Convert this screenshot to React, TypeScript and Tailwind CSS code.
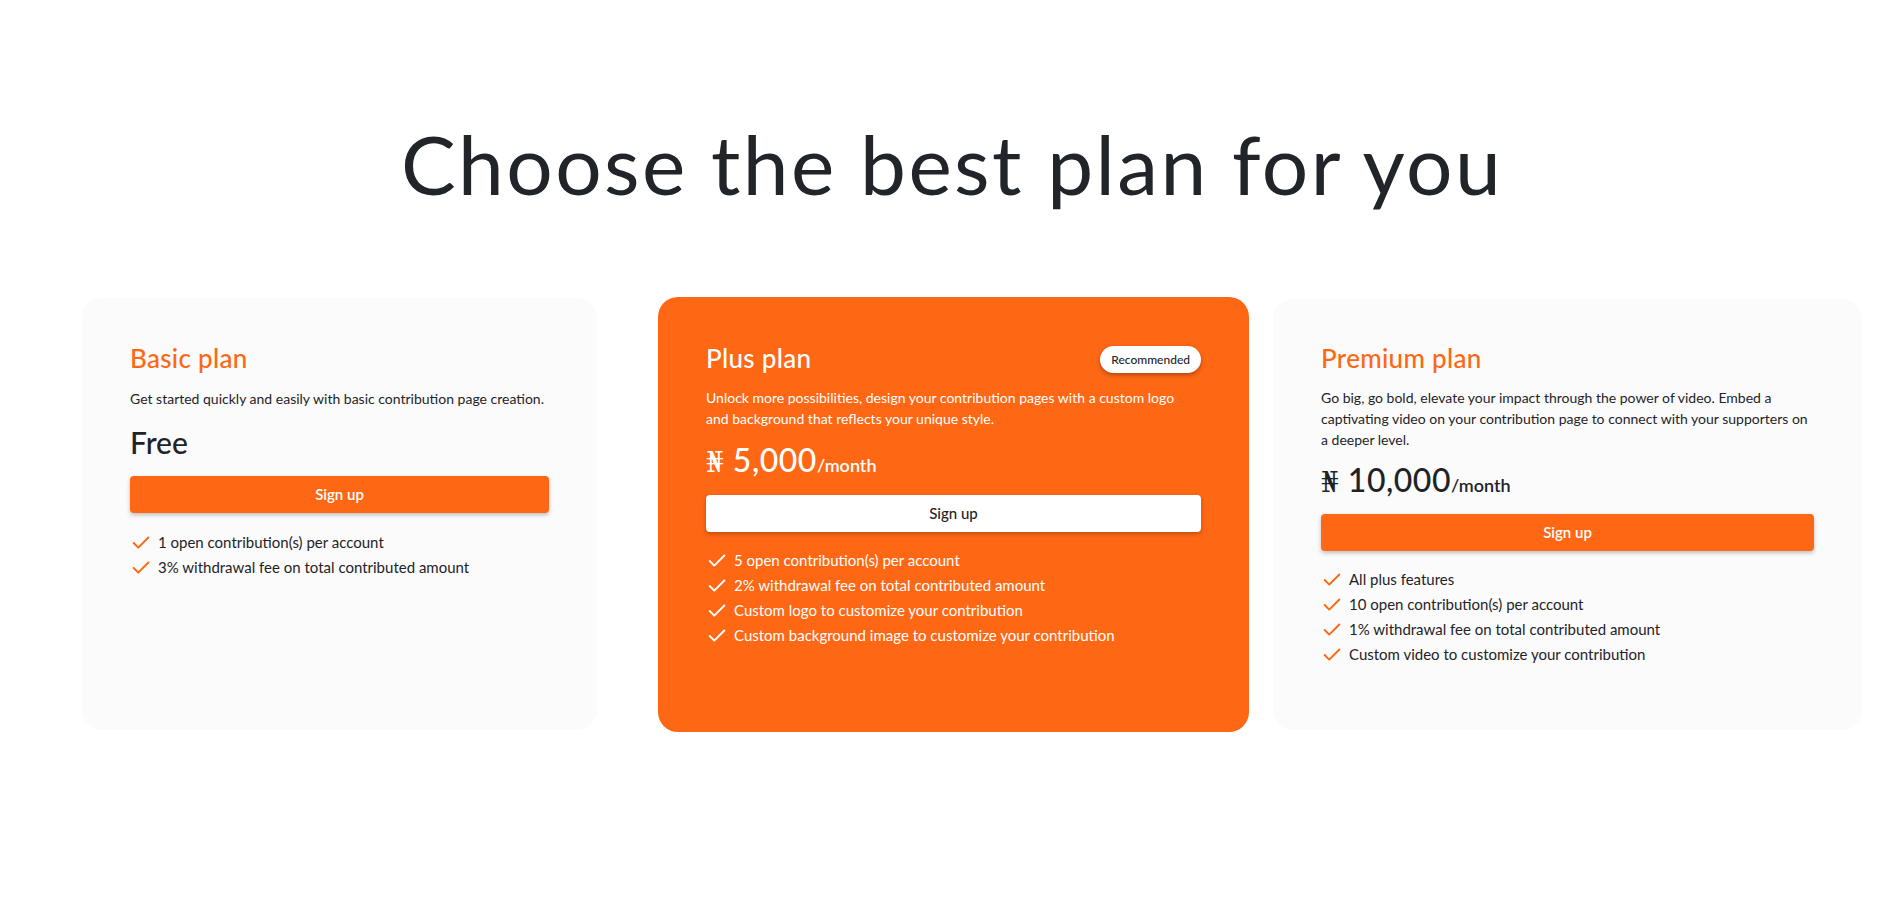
import React from "react";

const ORANGE = "#fe6714";

function Check({ white }: { white?: boolean }) {
  return (
    <svg
      width="22"
      height="22"
      viewBox="0 0 24 24"
      fill="none"
      stroke={white ? "#ffffff" : ORANGE}
      strokeWidth="2.1"
      strokeLinecap="round"
      strokeLinejoin="round"
      className="shrink-0"
    >
      <path d="M20 6 9 17l-5-5" />
    </svg>
  );
}

function Feature({ text, white }: { text: string; white?: boolean }) {
  return (
    <li className="flex items-center gap-[6px] h-[25px]">
      <Check white={white} />
      <span className={`text-[15px] leading-[25px] ${white ? "text-white" : "text-[#1f2328]"}`}>{text}</span>
    </li>
  );
}

function Price({ amount, white }: { amount: string; white?: boolean }) {
  return (
    <div className={`${white ? "mt-[13px]" : "mt-3"} h-[36px] flex items-baseline leading-[36px] ${white ? "text-white" : "text-[#1f2328]"}`}>
      <span className="text-[28px] mr-[9px]" style={{ fontFamily: '"DejaVu Serif", serif' }}>
        ₦
      </span>
      <span className="text-[32px] font-medium tracking-[0.5px]">{amount}</span>
      <span className="text-[18px] font-semibold">/month</span>
    </div>
  );
}

export default function App() {
  return (
    <div
      className="w-[1904px] min-h-[899px] bg-white"
      style={{ fontFamily: 'Lato, "Noto Sans", sans-serif' }}
    >
      <h1 className="pt-[122px] text-center text-[82px] leading-none font-normal text-[#212428] tracking-[2.4px]">
        Choose the best plan for you
      </h1>

      <div className="mt-[93px] flex items-start pl-[82px]">
        {/* Basic */}
        <div className="mt-px w-[515px] h-[432px] rounded-[20px] bg-[#fbfbfb] px-12 pt-[44px]">
          <div className="h-[32px] flex items-center">
            <h2 className="text-[26px] leading-[32px] font-medium text-[#fe6714] tracking-[0.3px]">Basic plan</h2>
          </div>
          <p className="mt-[14px] text-[14px] leading-[21px] text-[#1f2328]">
            Get started quickly and easily with basic contribution page creation.
          </p>
          <div className="mt-[15px] h-[36px] text-[30px] leading-[36px] font-medium text-[#1f2328]">Free</div>
          <button className="mt-4 w-full h-[37px] rounded-[4px] bg-[#fe6714] text-white text-[15px] font-semibold shadow-[0_2px_4px_rgba(0,0,0,0.25)]">
            Sign up
          </button>
          <ul className="mt-[17px] flex flex-col">
            <Feature text="1 open contribution(s) per account" />
            <Feature text="3% withdrawal fee on total contributed amount" />
          </ul>
        </div>

        {/* Plus */}
        <div className="ml-[61px] w-[591px] h-[435px] rounded-[20px] bg-[#fe6714] px-12 pt-[45px]">
          <div className="h-[32px] flex items-center justify-between">
            <h2 className="text-[26px] leading-[32px] font-medium text-white tracking-[0.3px]">Plus plan</h2>
            <span className="mt-[3px] h-[27px] px-[11px] flex items-center rounded-full bg-white text-[12px] font-medium text-[#1f2328] shadow-[0_2px_4px_rgba(0,0,0,0.3)]">
              Recommended
            </span>
          </div>
          <p className="mt-[13px] text-[14px] leading-[21px] text-white">
            Unlock more possibilities, design your contribution pages with a custom logo
            <br />
            and background that reflects your unique style.
          </p>
          <Price amount="5,000" white />
          <button className="mt-[17px] w-full h-[37px] rounded-[4px] bg-white text-[#1f2328] text-[15px] font-medium shadow-[0_2px_4px_rgba(0,0,0,0.25)]">
            Sign up
          </button>
          <ul className="mt-4 flex flex-col">
            <Feature white text="5 open contribution(s) per account" />
            <Feature white text="2% withdrawal fee on total contributed amount" />
            <Feature white text="Custom logo to customize your contribution" />
            <Feature white text="Custom background image to customize your contribution" />
          </ul>
        </div>

        {/* Premium */}
        <div className="ml-[24px] mt-[2px] w-[589px] h-[431px] rounded-[20px] bg-[#fbfbfb] px-12 pt-[43px]">
          <div className="h-[32px] flex items-center">
            <h2 className="text-[26px] leading-[32px] font-medium text-[#fe6714] tracking-[0.3px]">Premium plan</h2>
          </div>
          <p className="mt-[13px] text-[14px] leading-[21px] text-[#1f2328]">
            Go big, go bold, elevate your impact through the power of video. Embed a
            <br />
            captivating video on your contribution page to connect with your supporters on
            <br />
            a deeper level.
          </p>
          <Price amount="10,000" />
          <button className="mt-4 w-full h-[37px] rounded-[4px] bg-[#fe6714] text-white text-[15px] font-semibold shadow-[0_2px_4px_rgba(0,0,0,0.25)]">
            Sign up
          </button>
          <ul className="mt-4 flex flex-col">
            <Feature text="All plus features" />
            <Feature text="10 open contribution(s) per account" />
            <Feature text="1% withdrawal fee on total contributed amount" />
            <Feature text="Custom video to customize your contribution" />
          </ul>
        </div>
      </div>
    </div>
  );
}
